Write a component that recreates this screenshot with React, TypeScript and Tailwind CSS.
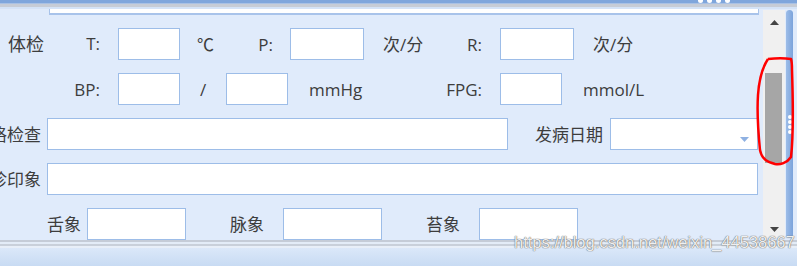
import React from "react";

function Box({ className = "", children }: { className?: string; children?: React.ReactNode }) {
  return (
    <div className={`h-[32px] shrink-0 bg-white border border-[#9dbde8] ${className}`}>{children}</div>
  );
}

function Arrow({ down = false }: { down?: boolean }) {
  return (
    <svg width="9" height="5" viewBox="0 0 9 5" className="shrink-0">
      <path d={down ? "M0 0 L9 0 L4.5 5Z" : "M0 5 L4.5 0 L9 5Z"} fill="#444" />
    </svg>
  );
}

export default function App() {
  return (
    <div className="relative w-[797px] h-[266px] overflow-hidden bg-[#e0ebfb] flex flex-col font-['Open_Sans','Noto_Sans_CJK_SC',sans-serif] text-[17px] leading-none text-[#3d3d3d] whitespace-nowrap">
      {/* top frame */}
      <div className="h-[3px] bg-[#7fa6dc] flex gap-[4px] pl-[698px]">
        {[0, 1, 2, 3].map((i) => (
          <div key={i} className="w-[5px] h-[5px] -mt-[2px] rounded-full bg-white" />
        ))}
      </div>
      <div className="h-[1px] bg-[#a9c1e4]" />
      <div className="h-[3px] bg-[#c6ccd6]" />
      <div className="h-[2px] bg-[#d4e3f7]" />

      <div className="flex h-[231px]">
        {/* form */}
        <div className="w-[763px] shrink-0 overflow-hidden flex flex-col">
          <div className="ml-[49px] w-[710px] h-[6px] shrink-0 bg-white border-l border-r border-b-2 border-[#a8c3ea]" />

          <div className="flex items-center h-[32px] mt-[13px] shrink-0">
            <div className="w-[100px] shrink-0 flex justify-between pl-[8px]">
              <span className="text-[18px]">体检</span>
              <span>T:</span>
            </div>
            <Box className="ml-[18px] w-[62px]" />
            <div className="w-[93px] shrink-0 flex justify-between pl-[17px]">
              <span>℃</span>
              <span>P:</span>
            </div>
            <Box className="ml-[17px] w-[74px]" />
            <div className="w-[118px] shrink-0 flex justify-between pl-[19px]">
              <span>次/分</span>
              <span>R:</span>
            </div>
            <Box className="ml-[18px] w-[74px]" />
            <span className="ml-[19px]">次/分</span>
          </div>

          <div className="flex items-center h-[32px] mt-[13px] shrink-0">
            <div className="w-[100px] shrink-0 flex justify-end">BP:</div>
            <Box className="ml-[18px] w-[62px]" />
            <div className="w-[46px] shrink-0 text-center">/</div>
            <Box className="w-[62px]" />
            <div className="w-[194px] shrink-0 flex justify-between pl-[21px]">
              <span>mmHg</span>
              <span>FPG:</span>
            </div>
            <Box className="ml-[18px] w-[62px]" />
            <span className="ml-[21px]">mmol/L</span>
          </div>

          <div className="flex items-center h-[32px] mt-[13px] shrink-0">
            <div className="w-[41px] shrink-0 flex justify-end overflow-hidden">
              <span className="shrink-0">体格检查</span>
            </div>
            <Box className="ml-[6px] w-[461px]" />
            <div className="w-[95px] shrink-0 flex justify-end">发病日期</div>
            <Box className="ml-[7px] w-[148px] flex items-end justify-end pr-[8px] pb-[7px]">
              <svg width="9" height="5" viewBox="0 0 9 5">
                <path d="M0 0 L9 0 L4.5 5Z" fill="#8fb1e2" />
              </svg>
            </Box>
          </div>

          <div className="flex items-center h-[32px] mt-[13px] shrink-0">
            <div className="w-[41px] shrink-0 flex justify-end overflow-hidden">
              <span className="shrink-0">初诊印象</span>
            </div>
            <Box className="ml-[6px] w-[711px]" />
          </div>

          <div className="flex items-center h-[32px] mt-[13px] shrink-0">
            <div className="w-[81px] shrink-0 flex justify-end">舌象</div>
            <Box className="ml-[6px] w-[99px]" />
            <div className="w-[78px] shrink-0 flex justify-end">脉象</div>
            <Box className="ml-[19px] w-[99px]" />
            <div className="w-[78px] shrink-0 flex justify-end">苔象</div>
            <Box className="ml-[19px] w-[99px]" />
          </div>
        </div>

        {/* scrollbar */}
        <div className="w-[22px] shrink-0 mt-[1px] mb-[2px] bg-[#f0f0f0] flex flex-col items-center">
          <div className="mt-[10px]">
            <Arrow />
          </div>
          <div className="mt-[48px] self-start ml-[2px] w-[17px] h-[90px] bg-[#a6a6a6]" />
          <div className="flex-1" />
          <div className="mb-[6px]">
            <Arrow down />
          </div>
        </div>

        {/* right frame */}
        <div className="w-[12px] shrink-0 pl-[1px] pt-[1px] pb-[2px] flex">
          <div className="w-[7px] rounded-full bg-gradient-to-r from-[#9dbde8] to-[#7ba3db] flex flex-col items-center justify-center gap-[1px]">
            {[0, 1, 2, 3].map((i) => (
              <div key={i} className="w-[4px] h-[4px] rounded-full bg-white" />
            ))}
          </div>
        </div>
      </div>

      {/* bottom frame */}
      <div className="h-[2px] bg-[#c5ccd7]" />
      <div className="h-[2px] bg-[#e3ecf7]" />
      <div className="h-[2px] bg-[#c9d0da]" />
      <div className="h-[2px] bg-[#e8eff8]" />
      <div className="h-[18px] bg-gradient-to-b from-[#dbe8f9] to-[#c8dbf3]" />

      {/* watermark */}
      <div className="absolute left-[514px] top-[234px] font-['Liberation_Sans',sans-serif] text-[16.5px] text-white/90 [text-shadow:0_0_1px_#555,0_0_1px_#777]">
        https://blog.csdn.net/weixin_44538667
      </div>

      {/* red annotation */}
      <svg className="absolute left-0 top-0 pointer-events-none" width="797" height="266">
        <path
          d="M768 59 C776 58 785 58 791 59 C792 62 792 66 792 70 C793 100 793 140 791 157 C787 163 780 165 775 164 C768 162 762 160 760 150 C758 130 757 110 758 95 C759 80 762 68 768 59"
          fill="none"
          stroke="#ff0000"
          strokeWidth="2.5"
        />
      </svg>
    </div>
  );
}
